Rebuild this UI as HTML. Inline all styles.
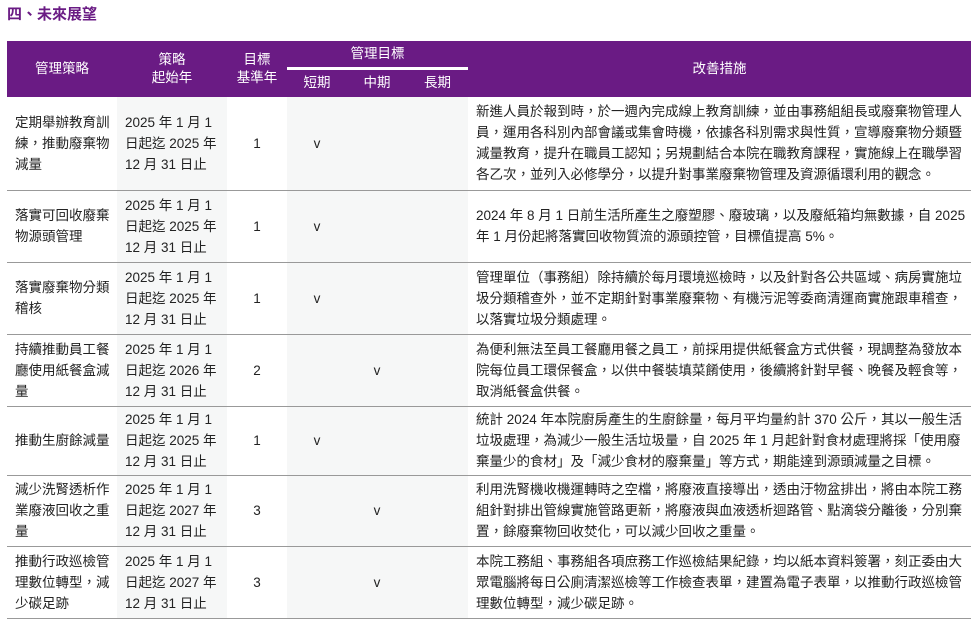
<!DOCTYPE html>
<html><head><meta charset="utf-8"><style>
body{margin:0;background:#fff;width:980px;height:624px;overflow:hidden;font-family:"Liberation Sans","Noto Sans CJK TC",sans-serif;color:#222}
h1{position:absolute;left:7px;top:4px;margin:0;font-size:15px;font-weight:bold;color:#6a1b84;line-height:22px}
table{position:absolute;left:7px;top:41px;border-collapse:collapse;table-layout:fixed;width:964px;font-size:13.5px}
th{background:#6a1b84;color:#fff;font-weight:normal;font-size:13.5px;padding:0;text-align:center;line-height:18px}
td{padding:0 0 0 8px;line-height:21px;border-bottom:1px solid #999;vertical-align:middle;white-space:nowrap;overflow:hidden}
td.c{text-align:center;padding:0}
.g{background:#f6f7f7}
.sub{border-top:3px solid #fff}
</style></head><body>
<h1>四、未來展望</h1>
<table>
<colgroup><col style="width:110px"><col style="width:110px"><col style="width:60px"><col style="width:60px"><col style="width:60px"><col style="width:61px"><col style="width:503px"></colgroup>
<tr style="height:27px"><th rowspan="2">管理策略</th><th rowspan="2">策略<br>起始年</th><th rowspan="2">目標<br>基準年</th><th colspan="3">管理目標</th><th rowspan="2">改善措施</th></tr>
<tr style="height:29px"><th class="sub">短期</th><th class="sub">中期</th><th class="sub">長期</th></tr>
<tr style="height:93px"><td>定期舉辦教育訓<br>練，推動廢棄物<br>減量</td><td class="g">2025 年 1 月 1<br>日起迄 2025 年<br>12 月 31 日止</td><td class="c">1</td><td class="c g">v</td><td class="c g"></td><td class="c g"></td><td>新進人員於報到時，於一週內完成線上教育訓練，並由事務組組長或廢棄物管理人<br>員，運用各科別內部會議或集會時機，依據各科別需求與性質，宣導廢棄物分類暨<br>減量教育，提升在職員工認知；另規劃結合本院在職教育課程，實施線上在職學習<br>各乙次，並列入必修學分，以提升對事業廢棄物管理及資源循環利用的觀念。</td></tr>
<tr style="height:72px"><td>落實可回收廢棄<br>物源頭管理</td><td class="g">2025 年 1 月 1<br>日起迄 2025 年<br>12 月 31 日止</td><td class="c">1</td><td class="c g">v</td><td class="c g"></td><td class="c g"></td><td>2024 年 8 月 1 日前生活所產生之廢塑膠、廢玻璃，以及廢紙箱均無數據，自 2025<br>年 1 月份起將落實回收物質流的源頭控管，目標值提高 5%。</td></tr>
<tr style="height:72px"><td>落實廢棄物分類<br>稽核</td><td class="g">2025 年 1 月 1<br>日起迄 2025 年<br>12 月 31 日止</td><td class="c">1</td><td class="c g">v</td><td class="c g"></td><td class="c g"></td><td>管理單位（事務組）除持續於每月環境巡檢時，以及針對各公共區域、病房實施垃<br>圾分類稽查外，並不定期針對事業廢棄物、有機污泥等委商清運商實施跟車稽查，<br>以落實垃圾分類處理。</td></tr>
<tr style="height:72px"><td>持續推動員工餐<br>廳使用紙餐盒減<br>量</td><td class="g">2025 年 1 月 1<br>日起迄 2026 年<br>12 月 31 日止</td><td class="c">2</td><td class="c g"></td><td class="c g">v</td><td class="c g"></td><td>為便利無法至員工餐廳用餐之員工，前採用提供紙餐盒方式供餐，現調整為發放本<br>院每位員工環保餐盒，以供中餐裝填菜餚使用，後續將針對早餐、晚餐及輕食等，<br>取消紙餐盒供餐。</td></tr>
<tr style="height:69px"><td>推動生廚餘減量</td><td class="g">2025 年 1 月 1<br>日起迄 2025 年<br>12 月 31 日止</td><td class="c">1</td><td class="c g">v</td><td class="c g"></td><td class="c g"></td><td>統計 2024 年本院廚房產生的生廚餘量，每月平均量約計 370 公斤，其以一般生活<br>垃圾處理，為減少一般生活垃圾量，自 2025 年 1 月起針對食材處理將採「使用廢<br>棄量少的食材」及「減少食材的廢棄量」等方式，期能達到源頭減量之目標。</td></tr>
<tr style="height:71px"><td>減少洗腎透析作<br>業廢液回收之重<br>量</td><td class="g">2025 年 1 月 1<br>日起迄 2027 年<br>12 月 31 日止</td><td class="c">3</td><td class="c g"></td><td class="c g">v</td><td class="c g"></td><td>利用洗腎機收機運轉時之空檔，將廢液直接導出，透由汙物盆排出，將由本院工務<br>組針對排出管線實施管路更新，將廢液與血液透析迴路管、點滴袋分離後，分別棄<br>置，餘廢棄物回收焚化，可以減少回收之重量。</td></tr>
<tr style="height:72px"><td>推動行政巡檢管<br>理數位轉型，減<br>少碳足跡</td><td class="g">2025 年 1 月 1<br>日起迄 2027 年<br>12 月 31 日止</td><td class="c">3</td><td class="c g"></td><td class="c g">v</td><td class="c g"></td><td>本院工務組、事務組各項庶務工作巡檢結果紀錄，均以紙本資料簽署，刻正委由大<br>眾電腦將每日公廁清潔巡檢等工作檢查表單，建置為電子表單，以推動行政巡檢管<br>理數位轉型，減少碳足跡。</td></tr>
</table>
</body></html>
